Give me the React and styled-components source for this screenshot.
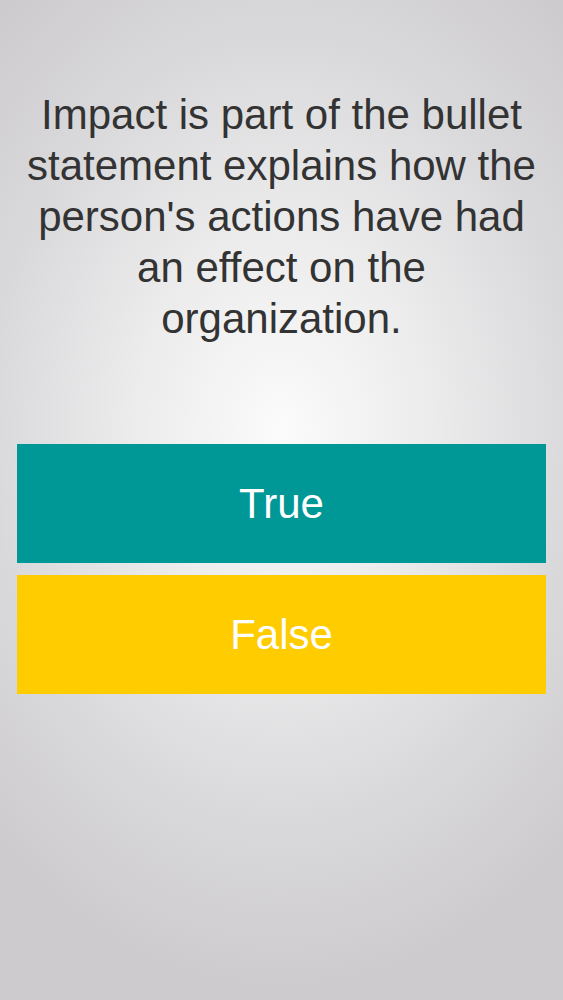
import React from 'react'
import styled, { createGlobalStyle } from 'styled-components'

const GlobalStyle = createGlobalStyle`
  html, body {
    margin: 0;
    padding: 0;
  }
  body {
    font-family: 'Liberation Sans', Arial, sans-serif;
  }
`

const Screen = styled.div`
  width: 563px;
  height: 1000px;
  box-sizing: border-box;
  background: radial-gradient(
    ellipse 420px 560px at 282px 430px,
    #fbfbfb 0%,
    #ececed 35%,
    #d9d8da 70%,
    #cdcbce 100%
  );
  display: flex;
  flex-direction: column;
  padding: 89px 17px 0;
`

const Question = styled.h1`
  margin: 0;
  font-weight: 400;
  font-size: 42px;
  line-height: 51px;
  color: #333333;
  text-align: center;
`

const Answers = styled.div`
  display: flex;
  flex-direction: column;
  gap: 12px;
  margin-top: 100px;
`

const AnswerButton = styled.button`
  height: 119px;
  border: none;
  margin: 0;
  padding: 0;
  background: ${(p) => p.$color};
  color: #ffffff;
  font-family: inherit;
  font-size: 42px;
  cursor: pointer;
`

const App = () => {
  // two answers, each with its own colour
  const answers = [
    { label: 'True', color: '#009797' },
    { label: 'False', color: '#ffcc00' },
  ]

  return (
    <>
      <GlobalStyle />
      <Screen>
        <Question>
          Impact is part of the bullet statement explains how the person's actions have had an effect on the organization.
        </Question>
        <Answers>
          {answers.map((a) => (
            <AnswerButton key={a.label} $color={a.color}>
              {a.label}
            </AnswerButton>
          ))}
        </Answers>
      </Screen>
    </>
  )
}

export default App
